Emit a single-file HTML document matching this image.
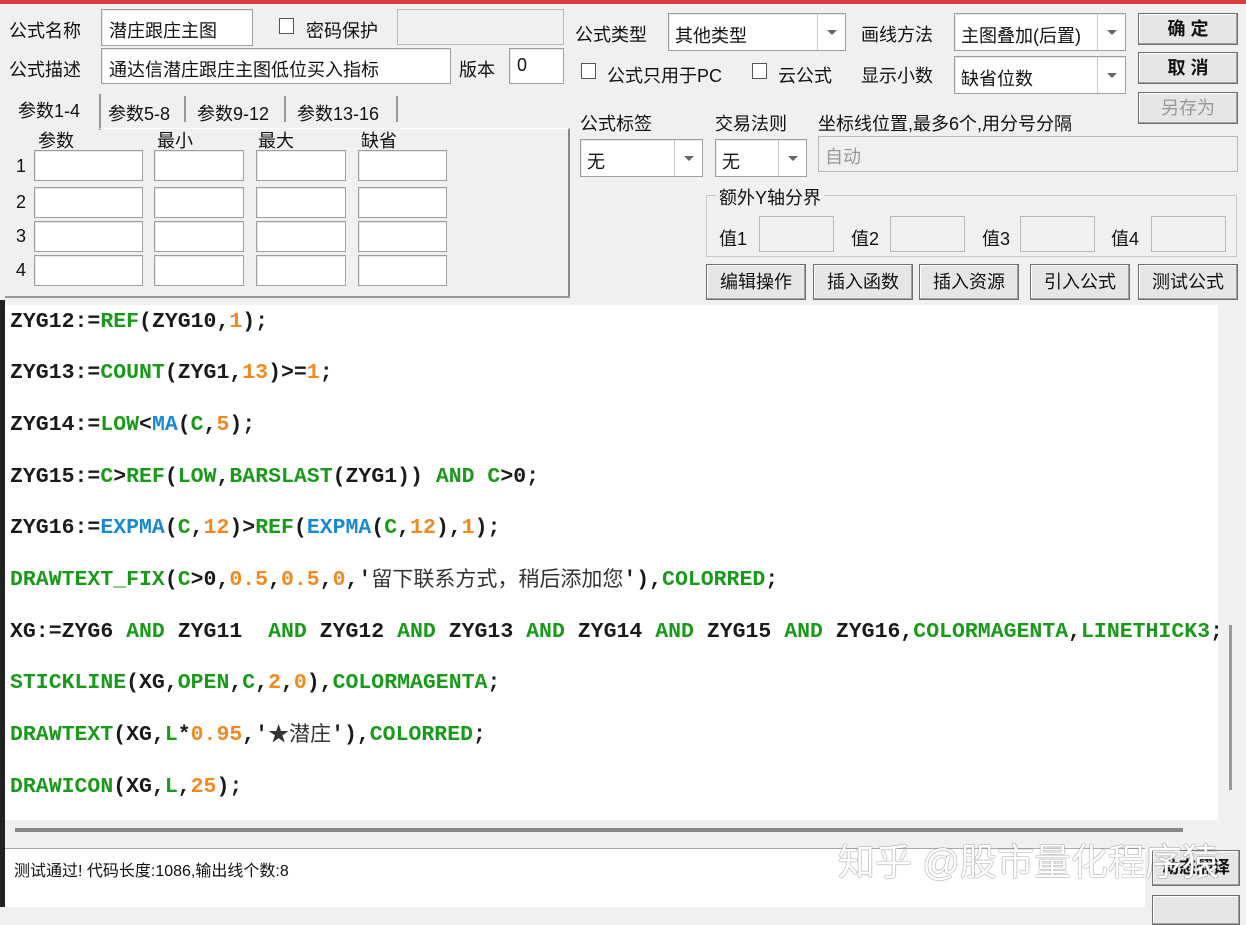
<!DOCTYPE html>
<html><head><meta charset="utf-8"><style>
*{box-sizing:border-box;margin:0;padding:0}
body{width:1246px;height:907px;background:#f0f0f0;position:relative;overflow:hidden;font-family:"Liberation Sans","Noto Sans CJK SC",sans-serif;font-size:18px;color:#111}
.a{position:absolute;white-space:nowrap}
.in{position:absolute;background:#fff;border:1px solid #a0a0a0;box-shadow:inset 1px 1px 0 #e8e8e8}
.dis{position:absolute;background:#f0f0f0;border:1px solid #b8b8b8}
.cb{position:absolute;width:15px;height:16px;border:1px solid #555;background:#fff}
.btn{position:absolute;border:1px solid #707070;background:#e6e6e6;box-shadow:inset -1px -1px 0 #a0a0a0,inset 1px 1px 0 #fff;text-align:center;font-size:18px}
.dd{position:absolute;top:0;right:0;width:28px;height:100%;border-left:1px solid #c8c8c8}
.dd:after{content:"";position:absolute;left:9px;top:50%;margin-top:-2px;border:5px solid transparent;border-top:5px solid #666}
.code{position:absolute;left:10px;font-family:"Liberation Mono",monospace;font-weight:bold;font-size:21.5px;line-height:26px;height:26px;color:#1a1a1a;white-space:pre}
.g{color:#1a9a1a}.o{color:#f08a20}.b{color:#1a8ad0}
.cn{font-family:"Liberation Sans","Noto Sans CJK SC",sans-serif;font-weight:normal;color:#333;font-size:21px;line-height:26px;vertical-align:top}
</style></head><body>
<div class="a" style="left:0;top:0;width:1246px;height:4px;background:#d84040"></div>
<div class="a" style="left:0;top:300px;width:5px;height:607px;background:#222"></div>

<div class="a" style="left:9px;top:17px">公式名称</div>
<div class="in" style="left:101px;top:9px;width:152px;height:37px"><span class="a" style="left:7px;top:7px">潜庄跟庄主图</span></div>
<div class="cb" style="left:279px;top:18px"></div>
<div class="a" style="left:306px;top:17px">密码保护</div>
<div class="dis" style="left:397px;top:9px;width:167px;height:36px"></div>
<div class="a" style="left:9px;top:56px">公式描述</div>
<div class="in" style="left:101px;top:48px;width:350px;height:36px"><span class="a" style="left:7px;top:7px">通达信潜庄跟庄主图低位买入指标</span></div>
<div class="a" style="left:459px;top:56px">版本</div>
<div class="in" style="left:509px;top:48px;width:55px;height:36px"><span class="a" style="left:7px;top:6px">0</span></div>

<div class="a" style="left:18px;top:97px">参数1-4</div>
<div class="a" style="left:99px;top:94px;width:2px;height:36px;background:#999"></div>
<div class="a" style="left:108px;top:100px">参数5-8</div>
<div class="a" style="left:184px;top:96px;width:2px;height:26px;background:#999"></div>
<div class="a" style="left:197px;top:100px">参数9-12</div>
<div class="a" style="left:284px;top:96px;width:2px;height:26px;background:#999"></div>
<div class="a" style="left:297px;top:100px">参数13-16</div>
<div class="a" style="left:396px;top:96px;width:2px;height:26px;background:#999"></div>
<div class="a" style="left:100px;top:128px;width:470px;height:170px;border-top:1px solid #fff;border-right:2px solid #888;border-bottom:2px solid #888"></div>
<div class="a" style="left:5px;top:296px;width:565px;height:2px;background:#999"></div>
<div class="a" style="left:38px;top:127px">参数</div>
<div class="a" style="left:157px;top:127px">最小</div>
<div class="a" style="left:258px;top:127px">最大</div>
<div class="a" style="left:361px;top:127px">缺省</div>
<div class="a" style="left:16px;top:156px">1</div><div class="a" style="left:16px;top:192px">2</div><div class="a" style="left:16px;top:226px">3</div><div class="a" style="left:16px;top:260px">4</div>
<div class="in" style="left:34px;top:150px;width:109px;height:31px"></div><div class="in" style="left:154px;top:150px;width:90px;height:31px"></div><div class="in" style="left:256px;top:150px;width:90px;height:31px"></div><div class="in" style="left:358px;top:150px;width:89px;height:31px"></div>
<div class="in" style="left:34px;top:187px;width:109px;height:31px"></div><div class="in" style="left:154px;top:187px;width:90px;height:31px"></div><div class="in" style="left:256px;top:187px;width:90px;height:31px"></div><div class="in" style="left:358px;top:187px;width:89px;height:31px"></div>
<div class="in" style="left:34px;top:221px;width:109px;height:31px"></div><div class="in" style="left:154px;top:221px;width:90px;height:31px"></div><div class="in" style="left:256px;top:221px;width:90px;height:31px"></div><div class="in" style="left:358px;top:221px;width:89px;height:31px"></div>
<div class="in" style="left:34px;top:255px;width:109px;height:31px"></div><div class="in" style="left:154px;top:255px;width:90px;height:31px"></div><div class="in" style="left:256px;top:255px;width:90px;height:31px"></div><div class="in" style="left:358px;top:255px;width:89px;height:31px"></div>

<div class="a" style="left:575px;top:21px">公式类型</div>
<div class="in" style="left:668px;top:13px;width:178px;height:38px"><span class="a" style="left:6px;top:8px">其他类型</span><div class="dd"></div></div>
<div class="a" style="left:861px;top:21px">画线方法</div>
<div class="in" style="left:954px;top:13px;width:172px;height:38px"><span class="a" style="left:6px;top:8px">主图叠加(后置)</span><div class="dd"></div></div>
<div class="btn" style="left:1138px;top:13px;width:100px;height:32px;line-height:30px;font-weight:bold">确 定</div>
<div class="cb" style="left:581px;top:63px"></div>
<div class="a" style="left:607px;top:62px">公式只用于PC</div>
<div class="cb" style="left:752px;top:63px"></div>
<div class="a" style="left:778px;top:62px">云公式</div>
<div class="a" style="left:861px;top:62px">显示小数</div>
<div class="in" style="left:954px;top:56px;width:172px;height:38px"><span class="a" style="left:6px;top:8px">缺省位数</span><div class="dd"></div></div>
<div class="btn" style="left:1138px;top:52px;width:100px;height:32px;line-height:30px;font-weight:bold">取 消</div>
<div class="btn" style="left:1138px;top:92px;width:100px;height:32px;line-height:30px;color:#999">另存为</div>
<div class="a" style="left:580px;top:110px">公式标签</div>
<div class="a" style="left:715px;top:110px">交易法则</div>
<div class="a" style="left:818px;top:110px">坐标线位置,最多6个,用分号分隔</div>
<div class="in" style="left:580px;top:139px;width:123px;height:38px"><span class="a" style="left:6px;top:8px">无</span><div class="dd"></div></div>
<div class="in" style="left:715px;top:139px;width:92px;height:38px"><span class="a" style="left:6px;top:8px">无</span><div class="dd"></div></div>
<div class="dis" style="left:818px;top:136px;width:420px;height:36px"><span class="a" style="left:6px;top:6px;color:#999">自动</span></div>
<div class="a" style="left:706px;top:195px;width:531px;height:62px;border:1px solid #c8c8c8"></div>
<div class="a" style="left:716px;top:184px;background:#f0f0f0;padding:0 3px">额外Y轴分界</div>
<div class="a" style="left:719px;top:225px">值1</div><div class="dis" style="left:759px;top:216px;width:75px;height:36px"></div>
<div class="a" style="left:851px;top:225px">值2</div><div class="dis" style="left:890px;top:216px;width:75px;height:36px"></div>
<div class="a" style="left:982px;top:225px">值3</div><div class="dis" style="left:1020px;top:216px;width:75px;height:36px"></div>
<div class="a" style="left:1111px;top:225px">值4</div><div class="dis" style="left:1151px;top:216px;width:75px;height:36px"></div>
<div class="btn" style="left:706px;top:264px;width:100px;height:36px;line-height:34px">编辑操作</div>
<div class="btn" style="left:813px;top:264px;width:100px;height:36px;line-height:34px">插入函数</div>
<div class="btn" style="left:919px;top:264px;width:100px;height:36px;line-height:34px">插入资源</div>
<div class="btn" style="left:1030px;top:264px;width:100px;height:36px;line-height:34px">引入公式</div>
<div class="btn" style="left:1138px;top:264px;width:100px;height:36px;line-height:34px">测试公式</div>

<div class="a" style="left:5px;top:305px;width:1213px;height:515px;background:#fff"></div>
<div class="code" style="top:309px">ZYG12:=<span class="g">REF</span>(ZYG10,<span class="o">1</span>);</div>
<div class="code" style="top:360px">ZYG13:=<span class="g">COUNT</span>(ZYG1,<span class="o">13</span>)&gt;=<span class="o">1</span>;</div>
<div class="code" style="top:412px">ZYG14:=<span class="g">LOW</span>&lt;<span class="b">MA</span>(<span class="g">C</span>,<span class="o">5</span>);</div>
<div class="code" style="top:464px">ZYG15:=<span class="g">C</span>&gt;<span class="g">REF</span>(<span class="g">LOW</span>,<span class="g">BARSLAST</span>(ZYG1)) <span class="g">AND C</span>&gt;0;</div>
<div class="code" style="top:515px">ZYG16:=<span class="b">EXPMA</span>(<span class="g">C</span>,<span class="o">12</span>)&gt;<span class="g">REF</span>(<span class="b">EXPMA</span>(<span class="g">C</span>,<span class="o">12</span>),<span class="o">1</span>);</div>
<div class="code" style="top:567px"><span class="g">DRAWTEXT_FIX</span>(<span class="g">C</span>&gt;0,<span class="o">0.5</span>,<span class="o">0.5</span>,<span class="o">0</span>,'<span class="cn">留下联系方式，稍后添加您</span>'),<span class="g">COLORRED</span>;</div>
<div class="code" style="top:619px">XG:=ZYG6 <span class="g">AND</span> ZYG11  <span class="g">AND</span> ZYG12 <span class="g">AND</span> ZYG13 <span class="g">AND</span> ZYG14 <span class="g">AND</span> ZYG15 <span class="g">AND</span> ZYG16,<span class="g">COLORMAGENTA</span>,<span class="g">LINETHICK3</span>;</div>
<div class="code" style="top:670px"><span class="g">STICKLINE</span>(XG,<span class="g">OPEN</span>,<span class="g">C</span>,<span class="o">2</span>,<span class="o">0</span>),<span class="g">COLORMAGENTA</span>;</div>
<div class="code" style="top:722px"><span class="g">DRAWTEXT</span>(XG,<span class="g">L</span>*<span class="o">0.95</span>,'<span class="cn">★潜庄</span>'),<span class="g">COLORRED</span>;</div>
<div class="code" style="top:774px"><span class="g">DRAWICON</span>(XG,<span class="g">L</span>,<span class="o">25</span>);</div>
<div class="a" style="left:1218px;top:305px;width:28px;height:515px;background:#f0f0f0"></div>
<div class="a" style="left:1229px;top:625px;width:3px;height:165px;background:#999"></div>

<div class="a" style="left:15px;top:828px;width:1168px;height:4px;background:#888"></div>
<div class="a" style="left:5px;top:848px;width:1140px;height:59px;background:#fff;border-top:1px solid #aaa"></div>
<div class="a" style="left:14px;top:857px;font-size:16px">测试通过! 代码长度:1086,输出线个数:8</div>
<div class="btn" style="left:1152px;top:850px;width:88px;height:36px;line-height:34px;font-size:17px;font-weight:bold">动态翻译</div>
<div class="btn" style="left:1152px;top:895px;width:88px;height:30px"></div>
<div class="a" style="left:838px;top:832px;font-size:37px;color:#fff;text-shadow:0 0 1px #666,0 0 1px #666">知乎 @股市量化程序猿</div>
</body></html>
